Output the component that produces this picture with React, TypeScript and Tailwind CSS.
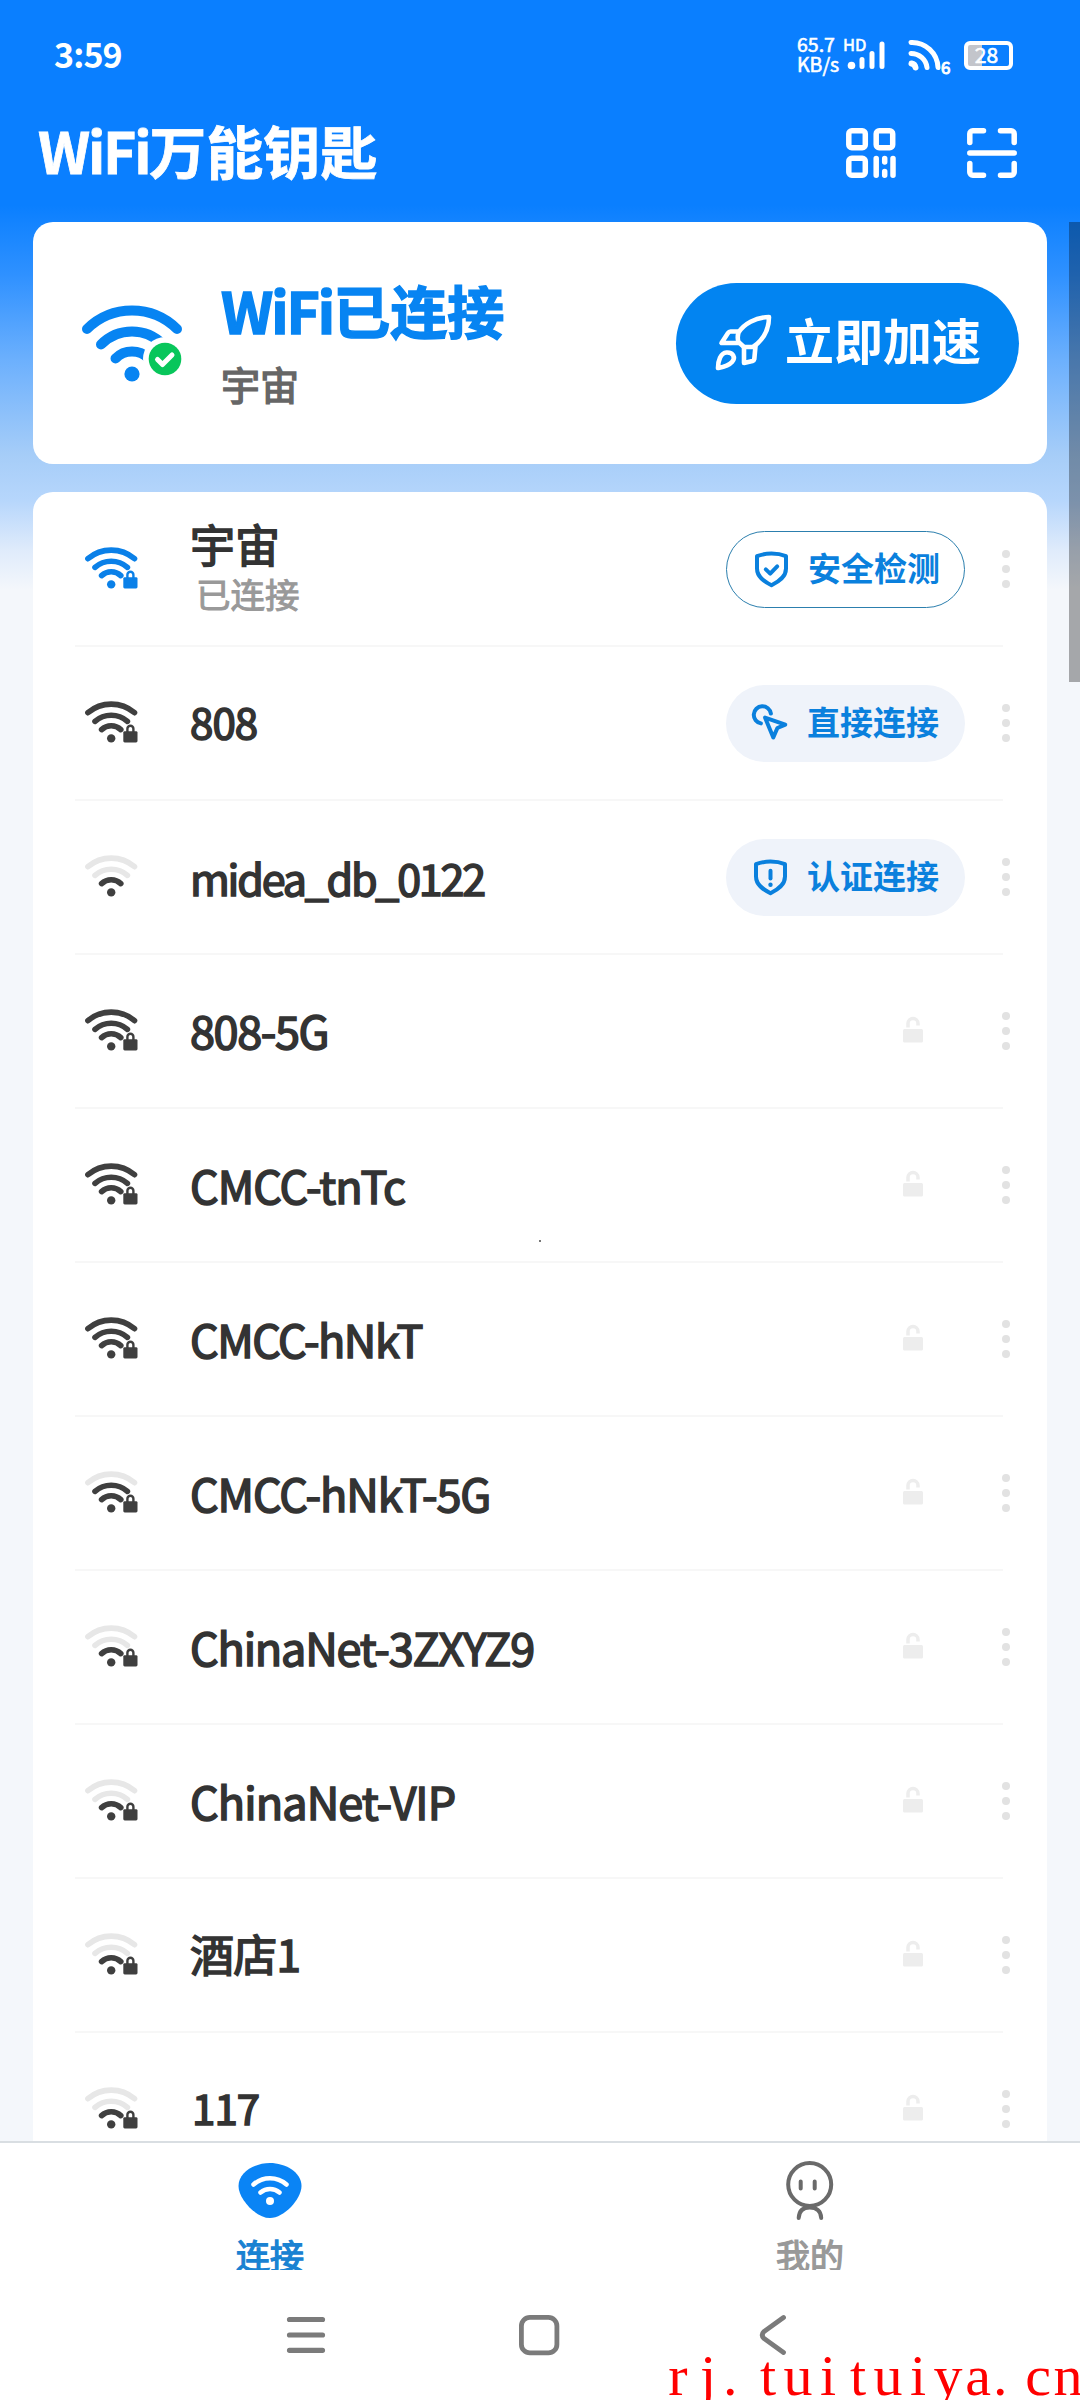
import clsx from 'clsx'

type Action = 'check' | 'direct' | 'verify'

type Network = {
    name: string
    level: 1 | 2 | 3
    className?: string
    secured?: boolean
    connected?: boolean
    action?: Action
}

const networks: Network[] = [
    { name: '宇宙', level: 3, secured: true, connected: true, action: 'check' },
    { name: '808', level: 3, secured: true, action: 'direct', className: 'text-[42px] tracking-[-0.9px] pb-1' },
    { name: 'midea_db_0122', level: 1, action: 'verify', className: 'text-[43px] tracking-[-2.2px]' },
    { name: '808-5G', level: 3, secured: true, className: 'text-[45px] tracking-[-1.4px] pb-0.5' },
    { name: 'CMCC-tnTc', level: 3, secured: true, className: 'text-[45px] tracking-[-1px]' },
    { name: 'CMCC-hNkT', level: 3, secured: true, className: 'text-[45px] tracking-[-1.5px]' },
    { name: 'CMCC-hNkT-5G', level: 2, secured: true, className: 'text-[45px] tracking-[-1.1px]' },
    { name: 'ChinaNet-3ZXYZ9', level: 1, secured: true, className: 'text-[45px] tracking-[-1.2px]' },
    { name: 'ChinaNet-VIP', level: 1, secured: true, className: 'text-[45px] tracking-[-0.9px]' },
    { name: '酒店1', level: 1, secured: true, className: 'text-[44px] tracking-[-0.8px] pb-1' },
    { name: '117', level: 1, secured: true, className: 'text-[42px] tracking-[-0.9px] pl-0.5 pb-1' },
]

const actionLabels: Record<Action, string> = {
    check: '安全检测',
    direct: '直接连接',
    verify: '认证连接',
}

function WifiLevel({ level, secured, connected }: Pick<Network, 'level' | 'secured' | 'connected'>) {
    const on = connected ? '#0a80e8' : '#3f3f3f'
    const off = '#e7e7e7'
    return (
        <svg width="60" height="50" viewBox="0 0 60 50" fill="none" strokeWidth="5.6" strokeLinecap="round">
            <path d="M6.9 14.7A36 36 0 0 1 53.5 14.7" stroke={level > 2 ? on : off} />
            <path d="M14 23.4A24.5 24.5 0 0 1 46.4 23.4" stroke={level > 1 ? on : off} />
            <path d="M20.6 31.6A14 14 0 0 1 39.8 31.6" stroke={on} />
            <circle cx="30.2" cy="40.4" r="4.2" fill={on} />
            {secured && (
                <>
                    <rect x="42.3" y="33.2" width="14.2" height="11.2" rx="1.4" fill={on} />
                    <path d="M46.4 34v-3.2a3 3 0 0 1 6 0V34" stroke={on} strokeWidth="2.4" />
                </>
            )}
        </svg>
    )
}

function ActionIcon({ action }: { action: Action }) {
    if (action === 'direct') {
        return (
            <svg width="40" height="40" viewBox="0 0 40 40" fill="none" stroke="#0a80dd" strokeWidth="4" strokeLinecap="round" strokeLinejoin="round">
                <path d="M10.9 20.4A8.6 8.6 0 1 1 20.9 10.6" />
                <path d="M15 14.6 35.3 21.6 27.4 25 23.3 34.4Z" />
            </svg>
        )
    }
    return (
        <svg width="40" height="40" viewBox="0 0 40 40" fill="none" stroke="#0a80dd" strokeWidth="4" strokeLinecap="round" strokeLinejoin="round">
            <path d="M20.5 4.6C15 4.6 10 5.6 6 7.2V19.5C6 28 13 32.5 20.5 36.2C28 32.5 35 28 35 19.5V7.2C31 5.6 26 4.6 20.5 4.6Z" />
            {action === 'check' ? (
                <path d="M14.8 20.4 19.2 24.6 26.2 17.4" />
            ) : (
                <>
                    <path d="M20.5 13.8V21.6" />
                    <circle cx="20.5" cy="27.7" r="2.2" fill="#0a80dd" stroke="none" />
                </>
            )}
        </svg>
    )
}

function NetworkRow({ network }: { network: Network }) {
    const { name, action, connected } = network
    return (
        <li className="relative flex h-[154px] shrink-0 items-center pl-12">
            <WifiLevel level={network.level} secured={network.secured} connected={connected} />
            <div className="ml-[49px] flex-1">
                <p className={clsx('whitespace-nowrap text-[#333] [-webkit-text-stroke:1.6px_currentColor]', connected ? 'text-[45px] leading-[48px]' : 'leading-[60px]', network.className)}>
                    {name}
                </p>
                {connected && <p className="ml-1.5 text-[34.5px] leading-[50px] text-[#999] [-webkit-text-stroke:1px_currentColor]">已连接</p>}
            </div>
            {action ? (
                <button
                    className={clsx(
                        'mr-[37px] flex h-[77px] w-[239px] items-center rounded-full pl-[24px] text-[33px] font-bold text-[#0a80dd]',
                        action === 'check' ? 'border border-[#2c7fae] bg-white' : 'bg-[#eff3fa]',
                    )}
                >
                    <ActionIcon action={action} />
                    <span className="ml-[17px] pb-0.5">{actionLabels[action]}</span>
                </button>
            ) : (
                <svg className="mr-[79px] mb-0.5" width="20" height="28" viewBox="0 0 20 28" fill="none">
                    <rect y="13" width="20" height="13.5" rx="1.5" fill="#ededed" />
                    <path d="M5 11.5V7.5A5 5 0 0 1 15 7.5V9.5" stroke="#ededed" strokeWidth="3.5" />
                </svg>
            )}
            <div className="mr-[37px] flex flex-col gap-[7px]">
                <i className="size-2 rounded-full bg-[#e2e2e2]" />
                <i className="size-2 rounded-full bg-[#e2e2e2]" />
                <i className="size-2 rounded-full bg-[#e2e2e2]" />
            </div>
            <div className="absolute right-[44px] -bottom-px left-[42px] h-0.5 bg-[#f7f7f7]" />
        </li>
    )
}

function StatusBar() {
    return (
        <div className="flex h-[110px] shrink-0 items-center pr-[67px] pl-[54px] text-white">
            <span className="flex-1 pb-1 text-[34px] font-bold tracking-tight">3:59</span>
            <div className="w-[46px] pb-0.5 text-[19.5px] leading-[20px] [-webkit-text-stroke:0.6px_currentColor]">
                <p>65.7</p>
                <p>KB/s</p>
            </div>
            <svg className="overflow-visible" width="48" height="36" viewBox="0 0 48 36" fill="none" stroke="#fff" strokeWidth="5" strokeLinecap="round">
                <text x="0" y="13.5" fill="#fff" stroke="#fff" strokeWidth="0.6" fontSize="16.5">HD</text>
                <circle cx="8.5" cy="28.5" r="3.8" fill="#fff" stroke="none" />
                <path d="M19 22.5V29.5M29 16.5V29.5M39 7V29.5" />
            </svg>
            <svg className="ml-[17px] overflow-visible" width="46" height="40" viewBox="0 0 46 40" fill="none" stroke="#fff" strokeWidth="5" strokeLinecap="round">
                <path d="M3 7.5A26 26 0 0 1 30 32.5M3 18.5A16 16 0 0 1 19 32.5" />
                <path d="M3.5 28.5A5 5 0 0 1 7.5 32.5" strokeWidth="6" />
                <text x="33" y="38.5" fill="#fff" stroke="#fff" strokeWidth="1" fontSize="17">6</text>
            </svg>
            <div className="ml-[10px] flex h-[29px] w-[49px] items-center justify-center rounded-[6px] border-4 border-white bg-linear-to-r from-[#c3c5cb] from-33% to-transparent to-33% pr-1 pb-0.5 text-[21px] leading-none [-webkit-text-stroke:0.6px_currentColor]">
                28
            </div>
        </div>
    )
}

function TitleBar() {
    return (
        <header className="flex h-[86px] shrink-0 items-center pr-[63px] pl-[38px] text-white">
            <h1 className="flex-1 pb-2 text-[57px] leading-none font-bold [-webkit-text-stroke:0.8px_currentColor]">
                <span className="tracking-[-2.2px]">WiFi</span>万能钥匙
            </h1>
            <svg width="50" height="50" viewBox="0 0 50 50" fill="none" stroke="#fff" strokeWidth="5.5" strokeLinecap="round">
                <rect x="2.8" y="2.8" width="16.5" height="17" rx="3" />
                <rect x="30.2" y="2.8" width="16.5" height="17" rx="3" />
                <rect x="2.8" y="30.2" width="16.5" height="17" rx="3" />
                <path d="M30.2 30.5V47.2M38.7 30.5V34M38.7 43.5V47.2M47 30.5V47.2" />
            </svg>
            <svg className="ml-[71px]" width="50" height="50" viewBox="0 0 50 50" fill="none" stroke="#fff" strokeWidth="5.5" strokeLinecap="round" strokeLinejoin="round">
                <path d="M2.8 14.5V5.8a3 3 0 0 1 3-3H16.5M33.5 2.8H44.2a3 3 0 0 1 3 3V14.5M2.8 35.5V44.2a3 3 0 0 0 3 3H16.5M33.5 47.2H44.2a3 3 0 0 0 3-3V35.5M2.8 25H47.2" />
            </svg>
        </header>
    )
}

function ConnectedCard() {
    return (
        <section className="mx-[33px] mt-[26px] flex h-[242px] shrink-0 items-center rounded-[20px] bg-white pr-[28px] pl-[47px]">
            <svg width="104" height="84" viewBox="0 0 104 84" fill="none" stroke="#0784f2" strokeWidth="10" strokeLinecap="round">
                <path d="M7 28A64 64 0 0 1 97 28M21 43.5A43.5 43.5 0 0 1 83 43.5M35.5 57.5A23 23 0 0 1 68.5 57.5" />
                <circle cx="52" cy="73" r="7.6" fill="#0784f2" stroke="none" />
                <circle cx="85" cy="58" r="22" fill="#fff" stroke="none" />
                <circle cx="85" cy="58" r="16.3" fill="#08c65b" stroke="none" />
                <path d="M77.5 58.5 82.5 63.5 92 54" stroke="#fff" strokeWidth="5" strokeLinejoin="round" />
            </svg>
            <div className="ml-[37px] flex-1">
                <h2 className="pb-2 text-[57px] leading-[60px] font-bold text-[#0784f2] [-webkit-text-stroke:1.5px_currentColor]">
                    <span className="tracking-[-2px]">WiFi</span>已连接
                </h2>
                <p className="mt-3 text-[39px] leading-[48px] text-[#666] [-webkit-text-stroke:1.5px_currentColor]">宇宙</p>
            </div>
            <button className="flex h-[121px] w-[343px] items-center rounded-full bg-[#0284f1] pl-[37px] text-[49px] font-bold text-white">
                <svg width="62" height="60" viewBox="0 0 62 60" fill="none" stroke="#fff" strokeWidth="4.6" strokeLinecap="round" strokeLinejoin="round">
                    <path d="M56 4C42 4.500 31 11 25.500 19.500C24.500 23 24.800 27 25.500 29L31 34H40C50 27 56 17 56 4Z" />
                    <path d="M25.500 18.500H17.500Q16 18.500 15 20L8.500 30H25.500M31 34V50L39.500 48Q41 47.500 41.300 46L42.500 33" />
                    <path d="M5 55C5 48 7.500 40 13.500 39.500C20 39 23 44.500 19 49C15.500 53 10 54 5 55Z" />
                </svg>
                <span className="ml-2.5 pb-2">立即加速</span>
            </button>
        </section>
    )
}

function TabBar() {
    return (
        <nav className="flex h-[129px] shrink-0 overflow-hidden border-t-2 border-[#d9dee2] bg-white text-[34px] leading-[48px]">
            <div className="flex flex-1 flex-col items-center pt-[19px] text-[#1a82d2] [-webkit-text-stroke:1.3px_currentColor]">
                <svg className="shrink-0" width="64" height="58" viewBox="0 0 64 58" fill="none" stroke="#fff" strokeWidth="4.5" strokeLinecap="round">
                    <path d="M32 1C47 1 63.500 10 63.500 24C63.500 37 46 56 32 56C18 56 0.500 37 0.500 24C0.500 10 17 1 32 1Z" fill="#0a84f5" stroke="none" />
                    <path d="M15.500 22.500A25 25 0 0 1 48.500 22.500M22.500 30.500A14.500 14.500 0 0 1 41.500 30.500" />
                    <circle cx="32" cy="39" r="4" fill="#fff" stroke="none" />
                </svg>
                <span className="mt-[11px]">连接</span>
            </div>
            <div className="flex flex-1 flex-col items-center pt-[19px] text-[#999] [-webkit-text-stroke:1.3px_currentColor]">
                <svg className="shrink-0 overflow-visible" width="64" height="58" viewBox="0 0 64 58" fill="none" stroke="#6a6a6a" strokeWidth="4" strokeLinecap="round">
                    <circle cx="31.7" cy="22.5" r="21.5" />
                    <path d="M22.7 19.5V26.5M36.7 19.5V26.5M20.7 56C21 49 25 45.5 31.7 45.5S43 49 43.2 56" />
                </svg>
                <span className="mt-[11px]">我的</span>
            </div>
        </nav>
    )
}

function SystemNav() {
    return (
        <div className="flex h-[130px] shrink-0 items-center bg-white pl-[284px]">
            <svg width="44" height="44" viewBox="0 0 44 44" fill="none" stroke="#7b7b7b" strokeWidth="5.2" strokeLinecap="round">
                <path d="M5.500 6.500H38.500M5.500 22H38.500M5.500 37.300H38.500" />
            </svg>
            <svg className="ml-[189px]" width="44" height="44" viewBox="0 0 44 44" fill="none" stroke="#7b7b7b" strokeWidth="4.8">
                <rect x="4.4" y="4.4" width="35.5" height="35.5" rx="8.5" />
            </svg>
            <svg className="ml-[189px]" width="44" height="44" viewBox="0 0 44 44" fill="none" stroke="#7b7b7b" strokeWidth="4.8" strokeLinecap="round">
                <path d="M33.500 4.500 14 18.500Q10.500 22 14 25.500L33.500 39.500" />
            </svg>
        </div>
    )
}

export default function App() {
    return (
        <main className="relative flex h-[2400px] w-[1080px] flex-col overflow-hidden bg-linear-[180deg,#0a7fff_205px,#2f91ff_275px,#6cb0fd_360px,#a6cdf8_455px,#b6d6fc_500px,#dfebfb_550px,#f4f7fb_590px] font-['Noto_Sans_CJK_SC',sans-serif]">
            <StatusBar />
            <TitleBar />
            <ConnectedCard />
            <ul className="mx-[33px] mt-7 flex min-h-0 flex-1 flex-col overflow-hidden rounded-t-[20px] bg-white">
                {networks.map(n => (
                    <NetworkRow key={n.name} network={n} />
                ))}
            </ul>
            <TabBar />
            <SystemNav />

            {/* scroll thumb */}
            <div className="absolute top-[222px] right-0 h-[460px] w-[11px] bg-black/32" />
            <div className="absolute top-[1240px] left-[539px] size-0.5 bg-[#777]" />

            <div className="absolute top-[2342px] left-[663px] flex font-['Liberation_Serif',serif] text-[58px] leading-[68px] text-[#f00]">
                {[...'rj.tuituiya.cn'].map((c, i) => (
                    <span key={i} className={clsx('w-[30px] shrink-0', c !== '.' && 'text-center')}>
                        {c}
                    </span>
                ))}
            </div>
        </main>
    )
}
